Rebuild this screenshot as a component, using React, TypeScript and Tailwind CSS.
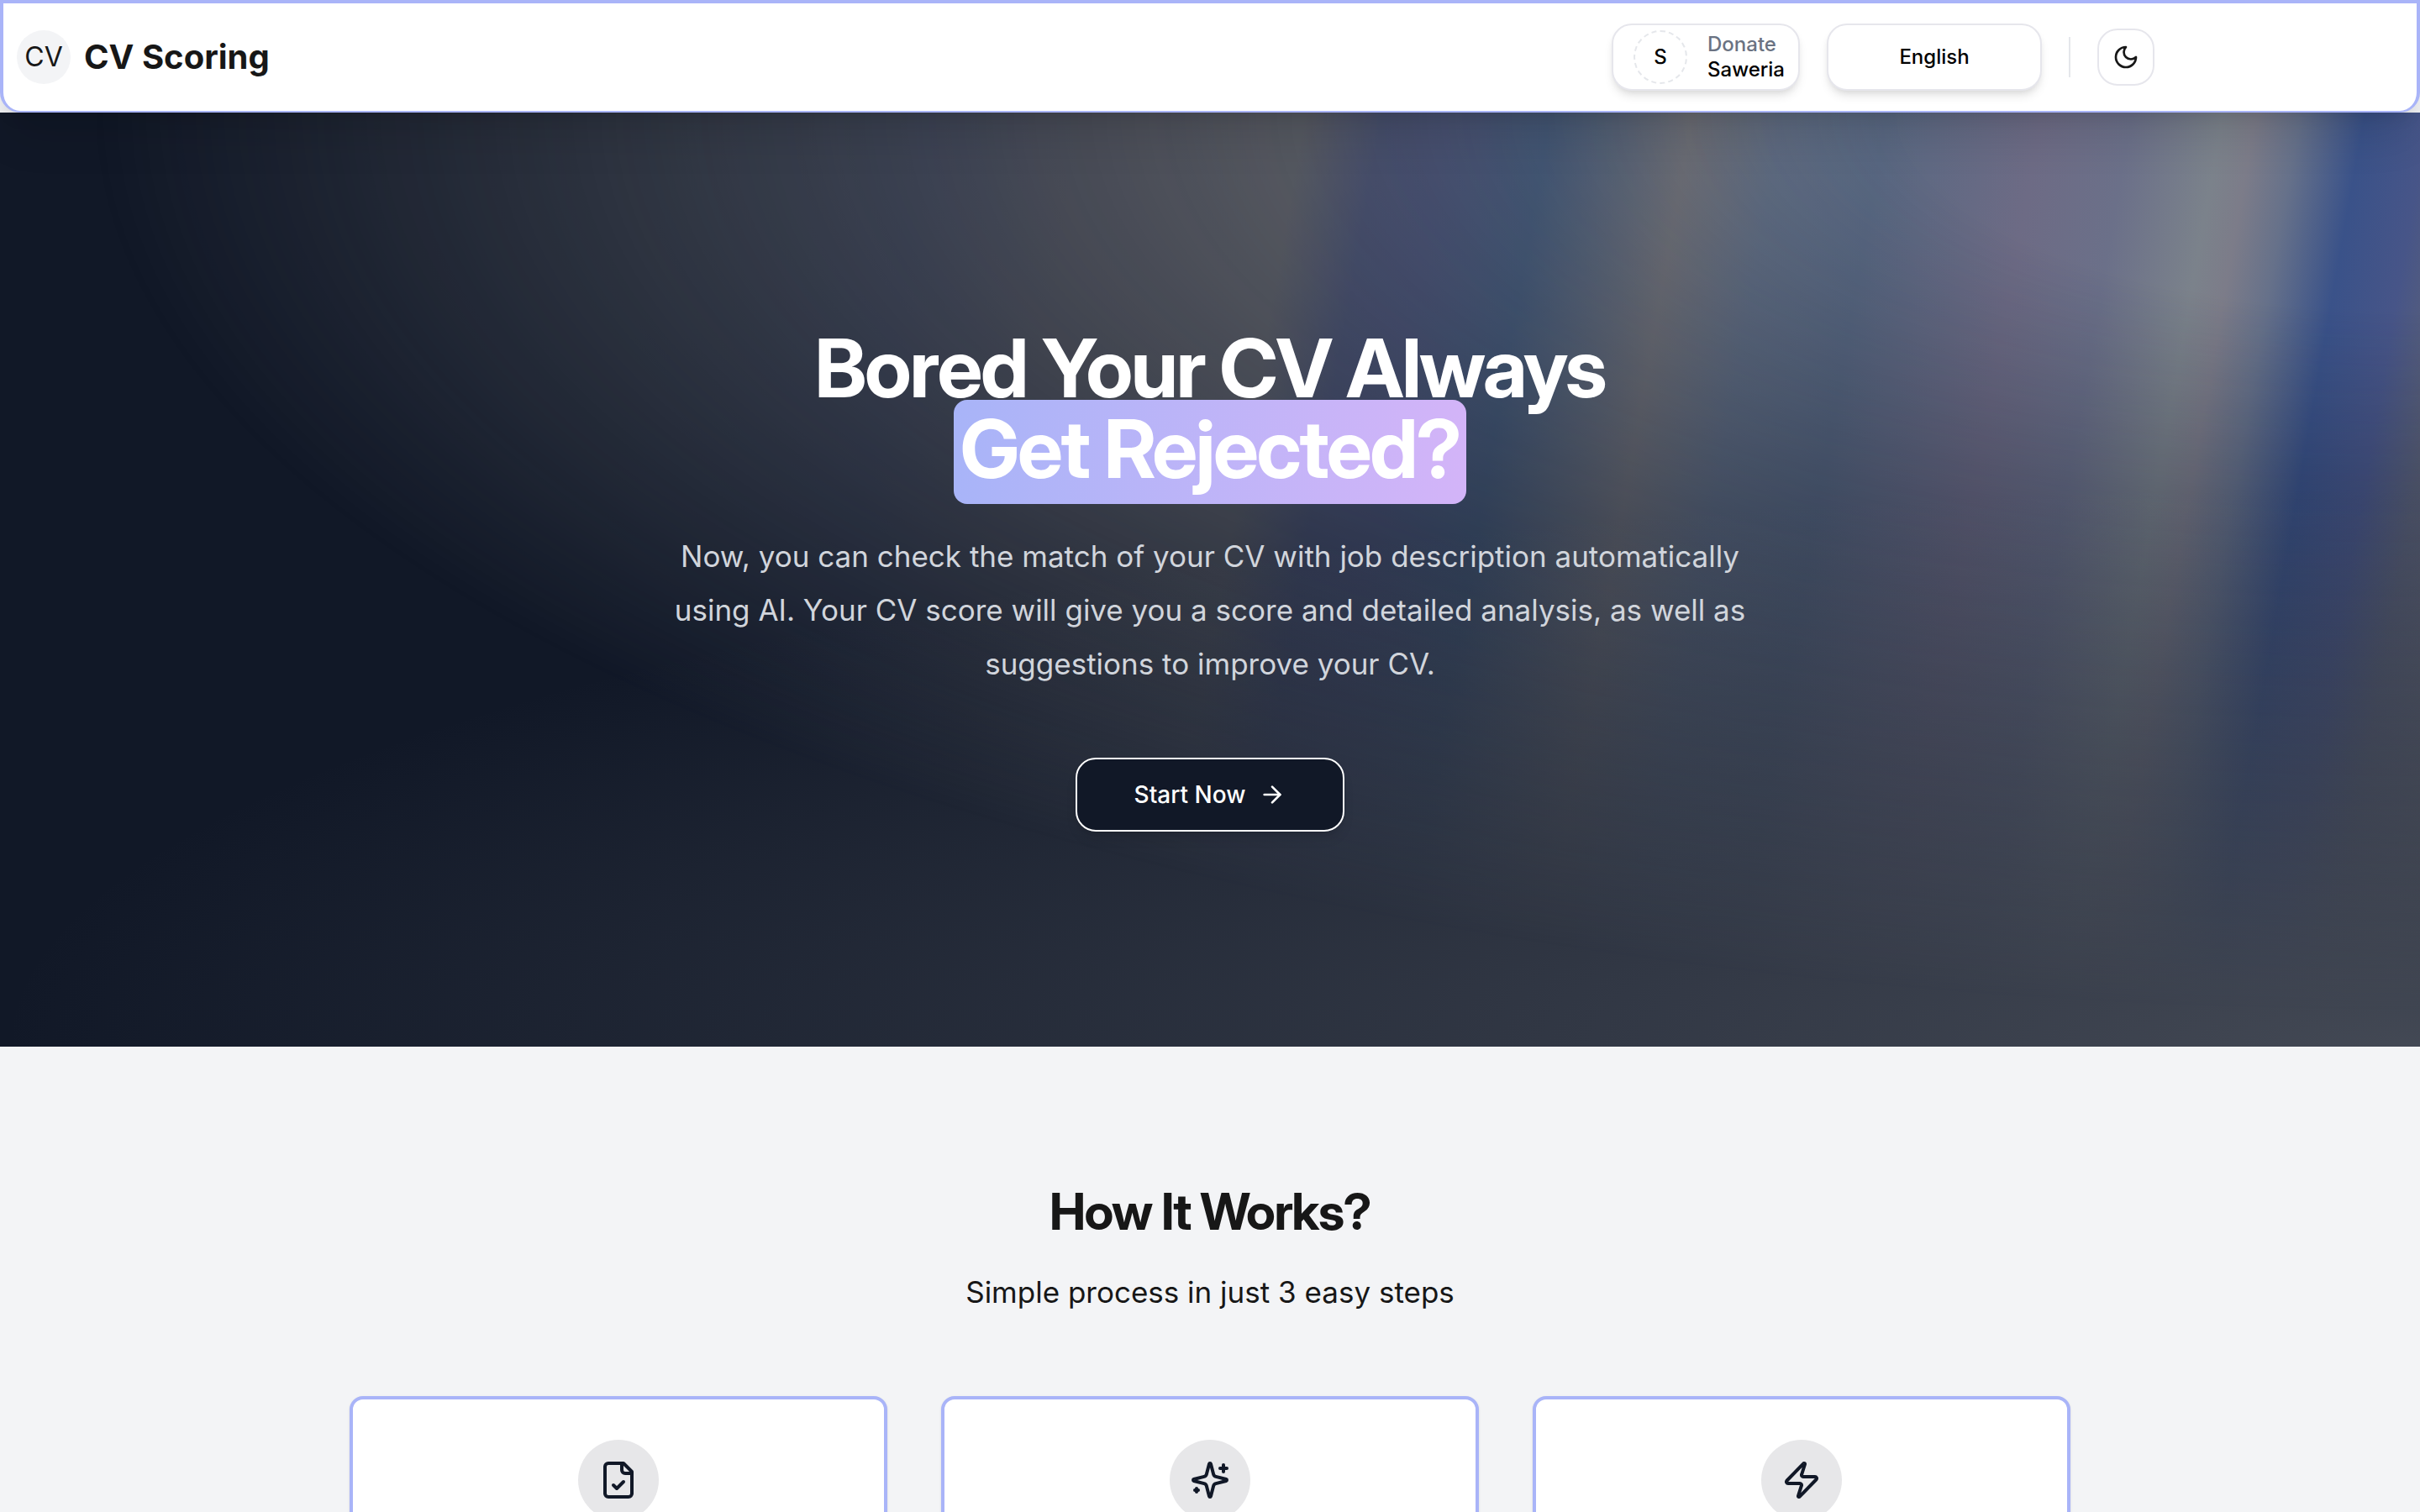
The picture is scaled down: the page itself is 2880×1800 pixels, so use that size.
import type { ReactNode } from "react";
import { ArrowRight } from "lucide-react";

function LineIcon({ className, children }: { className: string; children: ReactNode }) {
  return (
    <svg
      viewBox="0 0 24 24"
      fill="none"
      stroke="currentColor"
      strokeWidth={2}
      strokeLinecap="round"
      strokeLinejoin="round"
      aria-hidden="true"
      className={className}
    >
      {children}
    </svg>
  );
}

function MoonIcon() {
  return (
    <LineIcon className="size-8">
      <path d="M12 3a6 6 0 0 0 9 9 9 9 0 1 1-9-9Z" />
    </LineIcon>
  );
}

function FileCheckIcon() {
  return (
    <LineIcon className="size-12">
      <path d="M15 2H6a2 2 0 0 0-2 2v16a2 2 0 0 0 2 2h12a2 2 0 0 0 2-2V7Z" />
      <path d="M14 2v4a2 2 0 0 0 2 2h4" />
      <path d="m9 15 2 2 4-4" />
    </LineIcon>
  );
}

function SparklesIcon() {
  return (
    <LineIcon className="size-12">
      <path d="M9.937 15.5A2 2 0 0 0 8.5 14.063l-6.135-1.582a.5.5 0 0 1 0-.962L8.5 9.936A2 2 0 0 0 9.937 8.5l1.582-6.135a.5.5 0 0 1 .963 0L14.063 8.5A2 2 0 0 0 15.5 9.937l6.135 1.581a.5.5 0 0 1 0 .964L15.5 14.063a2 2 0 0 0-1.437 1.437l-1.582 6.135a.5.5 0 0 1-.963 0z" />
      <path d="M20 3v4" />
      <path d="M22 5h-4" />
      <path d="M4 17v2" />
      <path d="M5 18H3" />
    </LineIcon>
  );
}

function ZapIcon() {
  return (
    <LineIcon className="size-12">
      <path d="M4 14a1 1 0 0 1-.78-1.63l9.9-10.2a.5.5 0 0 1 .86.46l-1.92 6.02A1 1 0 0 0 13 10h7a1 1 0 0 1 .78 1.63l-9.9 10.2a.5.5 0 0 1-.86-.46l1.92-6.02A1 1 0 0 0 11 14z" />
    </LineIcon>
  );
}

const steps = [
  { label: "Upload your CV", Icon: FileCheckIcon },
  { label: "AI analysis", Icon: SparklesIcon },
  { label: "Instant result", Icon: ZapIcon },
];

function Header() {
  return (
    <header className="relative z-10 rounded-b-3xl border-4 border-b-2 border-[#a9b4f8] bg-white shadow-[0_40px_50px_-10px_rgb(0_0_0/0.1),0_16px_20px_-12px_rgb(0_0_0/0.1)]">
      <div className="flex max-w-[2560px] items-center justify-between py-6 pl-4">
        <a href="#home" className="flex items-center gap-4">
          <span className="flex size-16 items-center justify-center rounded-full bg-gray-100 text-[32px]">CV</span>
          <span className="text-[40px] leading-none font-bold">CV Scoring</span>
        </a>
        <nav className="flex items-center gap-8">
          <a
            href="#donate"
            className="flex h-20 items-center gap-6 rounded-3xl border-2 border-[#e6e6ec] bg-white pr-4 pl-6 text-2xl font-medium text-black shadow-[0_8px_12px_-2px_rgb(0_0_0/0.1),0_4px_8px_-4px_rgb(0_0_0/0.1)]"
          >
            <span className="flex size-16 items-center justify-center rounded-full border-2 border-dashed border-gray-200">
              S
            </span>
            <span className="flex flex-col leading-[30px]">
              <span className="text-gray-500">Donate</span>
              <span>Saweria</span>
            </span>
          </a>
          <button className="h-20 w-64 rounded-3xl border-2 border-[#e6e6ec] bg-white text-2xl font-medium text-black shadow-[0_8px_12px_-2px_rgb(0_0_0/0.1),0_4px_8px_-4px_rgb(0_0_0/0.1)]">
            English
          </button>
          <span className="h-12 w-0.5 bg-gray-200" />
          <button
            aria-label="Toggle theme"
            className="flex size-[68px] items-center justify-center rounded-3xl border-2 border-[#e6e6ec] bg-white"
          >
            <MoonIcon />
          </button>
        </nav>
      </div>
    </header>
  );
}

/* Slanted light bands that fade out from the top right corner, over a soft glow from the bottom right. */
function Aurora() {
  return (
    <div className="absolute inset-0 bg-[#111827]">
      <div className="absolute inset-0 bg-[linear-gradient(100deg,#74747a_0%,#74757a_12%,#74787f_26%,#6e7385_36%,#77777e_42%,#77787d_50.5%,#5b6385_53.5%,#586186_56%,#4e6484_60%,#75767d_65.5%,#626f85_69%,#596882_73%,#6d6b85_79%,#6b7089_82.5%,#7b828b_86%,#7c7c89_87.3%,#66718a_89%,#3a5289_91.5%,#475588_94%,#5a6078_96%,#6e6e76_100%)] [mask-image:radial-gradient(ellipse_at_100%_0%,black_15%,transparent_68%)]" />
      <div className="absolute inset-0 bg-[radial-gradient(ellipse_100%_60%_at_100%_100%,rgb(126_130_138/0.46),rgb(126_130_138/0))]" />
    </div>
  );
}

function Hero() {
  return (
    <section className="relative flex flex-col items-center py-64 text-center text-white">
      <Aurora />
      <div className="relative flex flex-col items-center">
        <h1 className="font-['Inter_Display','Inter',sans-serif] text-8xl leading-none font-bold tracking-tight">
          Bored Your CV Always
          <br />
          <span className="rounded-2xl bg-linear-to-r from-[#a8b4f8] to-[#d3b4f8] px-2 pb-2">Get Rejected?</span>
        </h1>
        <p className="mt-12 max-w-[1344px] text-[35px] leading-[64px] text-gray-300">
          Now, you can check the match of your CV with job description automatically using AI. Your CV score will give
          you a score and detailed analysis, as well as suggestions to improve your CV.
        </p>
        <button className="mt-20 flex h-22 w-80 items-center justify-center gap-4 rounded-3xl border-2 border-white bg-[#111827] text-[28px] font-medium shadow-lg">
          Start Now
          <ArrowRight className="size-8" />
        </button>
      </div>
    </section>
  );
}

function HowItWorks() {
  return (
    <section className="px-8 pt-40 text-center">
      <h2 className="font-['Inter_Display','Inter',sans-serif] text-6xl leading-[72px] font-bold tracking-tight">
        How It Works?
      </h2>
      <p className="mt-8 text-[35px] leading-[56px]">Simple process in just 3 easy steps</p>
      <ul className="mx-auto mt-24 grid max-w-[2048px] grid-cols-3 gap-16">
        {steps.map(({ label, Icon }) => (
          <li
            key={label}
            aria-label={label}
            className="flex justify-center rounded-2xl border-4 border-[#a9b4f8] bg-white p-12 shadow-sm"
          >
            <span className="flex size-24 items-center justify-center rounded-full bg-[#e7e7e9] text-[#111827]">
              <Icon />
            </span>
          </li>
        ))}
      </ul>
    </section>
  );
}

export default function App() {
  return (
    <main className="h-screen overflow-hidden bg-gray-100 font-['Inter',sans-serif] text-[#171717]">
      <Header />
      <Hero />
      <HowItWorks />
    </main>
  );
}
